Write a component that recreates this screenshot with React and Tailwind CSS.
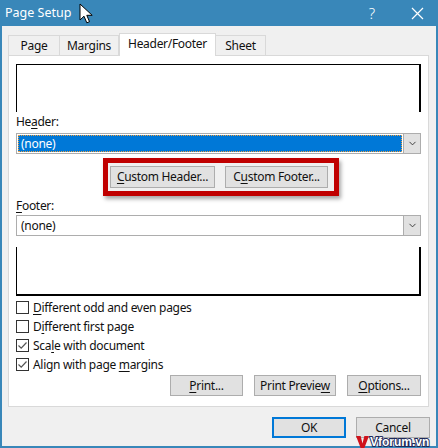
import { ChevronDown } from "lucide-react";

const FONT = { fontFamily: '"Noto Sans", "Open Sans", sans-serif' };

function Key({ children }) {
  return <span className="underline underline-offset-[2px] decoration-[1px]">{children}</span>;
}

function Tab({ label, active, width }) {
  return (
    <div
      className={
        active
          ? "h-[23px] -mb-px bg-white border border-b-0 border-[#d9d9d9] flex items-center justify-center relative z-10"
          : "h-[20px] bg-[#f0f0f0] border border-b-0 border-[#d9d9d9] -ml-px first:ml-0 flex items-center justify-center"
      }
      style={{ width }}
    >
      <span className={active ? "pb-[3px]" : "pt-px"}>{label}</span>
    </div>
  );
}

function Dropdown({ selected }) {
  return (
    <div className="h-[21px] border border-[#adadad] bg-white flex">
      <div className="flex-1 p-px">
        <div
          className={
            selected
              ? "h-full bg-[#0078d7] text-white border border-dotted border-[#f0a040] flex items-center pl-[2px]"
              : "h-full flex items-center pl-[3px]"
          }
        >
          (none)
        </div>
      </div>
      <div className="w-[17px] bg-[#e1e1e1] border-l border-[#adadad] flex items-center justify-center">
        <ChevronDown className="w-[11px] h-[11px] text-[#333]" strokeWidth={2} />
      </div>
    </div>
  );
}

function Button({ children, className = "" }) {
  return (
    <div
      className={
        "h-[21px] bg-[#e1e1e1] border border-[#adadad] flex items-center justify-center " + className
      }
    >
      {children}
    </div>
  );
}

function Check({ checked, children }) {
  return (
    <div className="h-[19px] flex items-center gap-[4px]">
      <div className="w-[13px] h-[13px] border border-[#333] bg-white flex items-center justify-center">
        {checked && (
          <svg width="11" height="11" viewBox="0 0 11 11">
            <path d="M1.5 5.5 L4.2 8.2 L9.5 2.5" fill="none" stroke="#555" strokeWidth="1.2" />
          </svg>
        )}
      </div>
      <span>{children}</span>
    </div>
  );
}

export default function App() {
  return (
    <div
      className="relative w-[438px] h-[448px] overflow-hidden bg-[#f0f0f0] text-[12px] tracking-[-0.3px] text-[#111] flex flex-col"
      style={FONT}
    >
      {/* title bar */}
      <div className="h-[26px] bg-[#3987b9] flex items-center pl-[5px] pr-[14px] text-white shrink-0 tracking-normal">
        <span className="text-[12.5px]">Page Setup</span>
        <div className="flex-1" />
        <span className="text-[15px] mr-[36px] font-light">?</span>
        <svg width="13" height="13" viewBox="0 0 13 13">
          <path d="M1 1 L12 12 M12 1 L1 12" stroke="white" strokeWidth="1.2" />
        </svg>
      </div>
      <svg className="absolute left-[79px] top-[3px]" width="16" height="22" viewBox="0 0 16 22">
        <path
          d="M1 1 L1 17 L5 13.2 L7.8 19.8 L10.5 18.7 L7.8 12.3 L13.2 12.3 Z"
          fill="white"
          stroke="black"
          strokeWidth="1"
          strokeLinejoin="round"
        />
      </svg>

      {/* body */}
      <div className="flex-1 border-x-2 border-b-2 border-[#3987b9] pl-[6px] pr-[7px] pt-[7px] flex flex-col">
        <div className="flex items-end h-[22px]">
          <Tab label="Page" width={52} />
          <Tab label="Margins" width={60} />
          <Tab label="Header/Footer" active width={97} />
          <Tab label="Sheet" width={51} />
        </div>

        <div className="h-[352px] bg-white border border-[#d9d9d9] pl-[7px] pr-[7px] flex flex-col">
          <div className="mt-[8px] h-[48px] border-t border-l border-r-2 border-black" />

          <div className="mt-[2px] h-[16px] leading-[16px]">
            He<Key>a</Key>der:
          </div>
          <div className="mt-[3px]">
            <Dropdown selected />
          </div>

          <div className="mt-[4px] ml-[87px] w-[236px] h-[38px] border-[5px] border-[#c00000] shadow-[2px_3px_4px_rgba(0,0,0,0.35)] bg-[#f0f0f0] flex items-center gap-[10px] px-[2px]">
            <Button className="w-[105px] h-[22px]">
              <span>
                <Key>C</Key>ustom Header...
              </span>
            </Button>
            <Button className="w-[103px] h-[22px]">
              <span>
                C<Key>u</Key>stom Footer...
              </span>
            </Button>
          </div>

          <div className="mt-[2px] h-[16px] leading-[16px]">
            <Key>F</Key>ooter:
          </div>
          <div className="mt-[1px]">
            <Dropdown />
          </div>

          <div className="mt-[11px] h-[49px] border-l border-r-2 border-b-2 border-black" />

          <div className="mt-[2px] flex flex-col">
            <Check>
              <Key>D</Key>ifferent odd and even pages
            </Check>
            <Check>
              D<Key>i</Key>fferent first page
            </Check>
            <Check checked>
              Sca<Key>l</Key>e with document
            </Check>
            <Check checked>
              Align with page <Key>m</Key>argins
            </Check>
          </div>

          <div className="mt-[1px] flex justify-end gap-[11px]">
            <Button className="w-[73px]">
              <span>
                <Key>P</Key>rint...
              </span>
            </Button>
            <Button className="w-[82px]">
              <span>
                Print Previe<Key>w</Key>
              </span>
            </Button>
            <Button className="w-[74px]">
              <span>
                <Key>O</Key>ptions...
              </span>
            </Button>
          </div>
        </div>

        <div className="mt-[10px] flex justify-end gap-[10px] -mr-[1px]">
          <div className="w-[74px] h-[21px] bg-[#e1e1e1] border-2 border-[#0078d7] flex items-center justify-center">
            OK
          </div>
          <Button className="w-[74px]">Cancel</Button>
        </div>
      </div>

      {/* watermark */}
      <div className="absolute left-[356px] bottom-0 flex items-end gap-[1px] tracking-normal">
        <svg width="13" height="12" viewBox="0 0 14 13">
          <path d="M0 0 L5 0 L7 8 L9 0 L14 0 L9 13 L5 13 Z" fill="#d0121b" />
        </svg>
        <span
          className="text-[12px] leading-[12px] font-bold text-white"
          style={{
            WebkitTextStroke: "2px #1d2a5a",
            paintOrder: "stroke fill",
            fontFamily: '"Liberation Sans", sans-serif',
          }}
        >
          Vforum.vn
        </span>
      </div>
    </div>
  );
}
